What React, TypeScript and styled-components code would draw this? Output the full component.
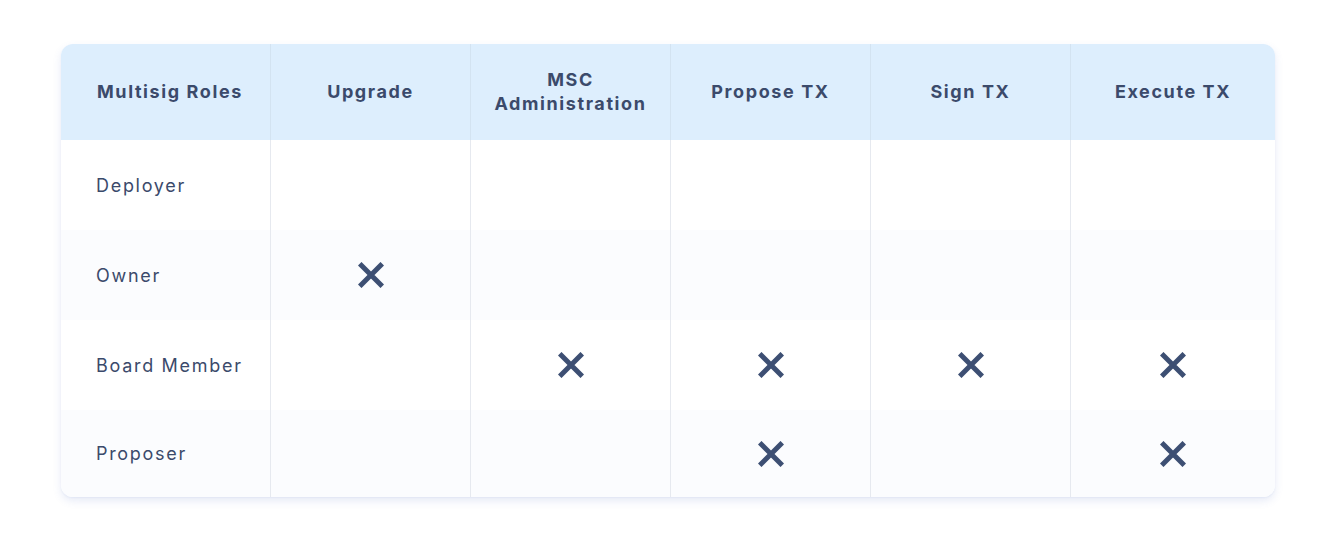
import React from "react";
import styled, { createGlobalStyle } from "styled-components";

const Global = createGlobalStyle`
  html, body { margin: 0; padding: 0; background: #ffffff; }
  body { font-family: "Inter", "Open Sans", sans-serif; }
`;

const Page = styled.div`
  width: 1336px;
  height: 552px;
  padding: 44px 61px 0 61px;
  box-sizing: border-box;
`;

const Table = styled.div`
  display: grid;
  grid-template-columns: 210px 200px 200px 200px 200px 204px;
  grid-template-rows: 96px 90px 90px 90px 87px;
  border-radius: 12px;
  overflow: hidden;
  background: #ffffff;
  box-shadow: 0 4px 8px rgba(70, 100, 190, 0.13), 0 1px 2px rgba(70, 100, 190, 0.06);
`;

const HeadCell = styled.div<{ $first?: boolean; $last?: boolean }>`
  background: #ddeefd;
  display: flex;
  align-items: center;
  justify-content: ${(p) => (p.$first ? "flex-start" : "center")};
  text-align: ${(p) => (p.$first ? "left" : "center")};
  padding: ${(p) => (p.$first ? "0 0 0 36px" : "0 6px")};
  border-right: ${(p) => (p.$last ? "none" : "1px solid #d3e3f1")};
  font-family: "Inter", sans-serif;
  font-weight: 700;
  font-size: 18px;
  line-height: 24px;
  letter-spacing: 1.6px;
  color: #3b4a6b;
  white-space: pre-line;
`;

const BodyCell = styled.div<{ $first?: boolean; $last?: boolean; $alt?: boolean }>`
  background: ${(p) => (p.$alt ? "#fbfcfe" : "#ffffff")};
  display: flex;
  align-items: center;
  justify-content: ${(p) => (p.$first ? "flex-start" : "center")};
  padding: ${(p) => (p.$first ? "0 0 0 35px" : "0")};
  border-right: ${(p) => (p.$last ? "none" : "1px solid #e6e9ef")};
  font-family: "Inter", sans-serif;
  font-weight: 400;
  font-size: 18px;
  letter-spacing: 1.7px;
  color: #3b4a6b;
`;

const Cross = () => (
  <svg width="26" height="26" viewBox="0 0 26 26" aria-hidden="true">
    <path
      d="M3.5 3.5 L22.5 22.5 M22.5 3.5 L3.5 22.5"
      stroke="#3d4f73"
      strokeWidth="5"
      strokeLinecap="square"
      fill="none"
    />
  </svg>
);

const headers = ["Multisig Roles", "Upgrade", "MSC\nAdministration", "Propose TX", "Sign TX", "Execute TX"];

const rows: { role: string; marks: boolean[] }[] = [
  { role: "Deployer", marks: [false, false, false, false, false] },
  { role: "Owner", marks: [true, false, false, false, false] },
  { role: "Board Member", marks: [false, true, true, true, true] },
  { role: "Proposer", marks: [false, false, true, false, true] },
];

export default function App() {
  return (
    <>
      <Global />
      <Page>
        <Table>
          {headers.map((h, i) => (
            <HeadCell key={h} $first={i === 0} $last={i === headers.length - 1}>
              {h}
            </HeadCell>
          ))}
          {rows.map((r, ri) => (
            <React.Fragment key={r.role}>
              <BodyCell $first $alt={ri % 2 === 1}>
                {r.role}
              </BodyCell>
              {r.marks.map((m, mi) => (
                <BodyCell key={mi} $alt={ri % 2 === 1} $last={mi === r.marks.length - 1}>
                  {m ? <Cross /> : null}
                </BodyCell>
              ))}
            </React.Fragment>
          ))}
        </Table>
      </Page>
    </>
  );
}
